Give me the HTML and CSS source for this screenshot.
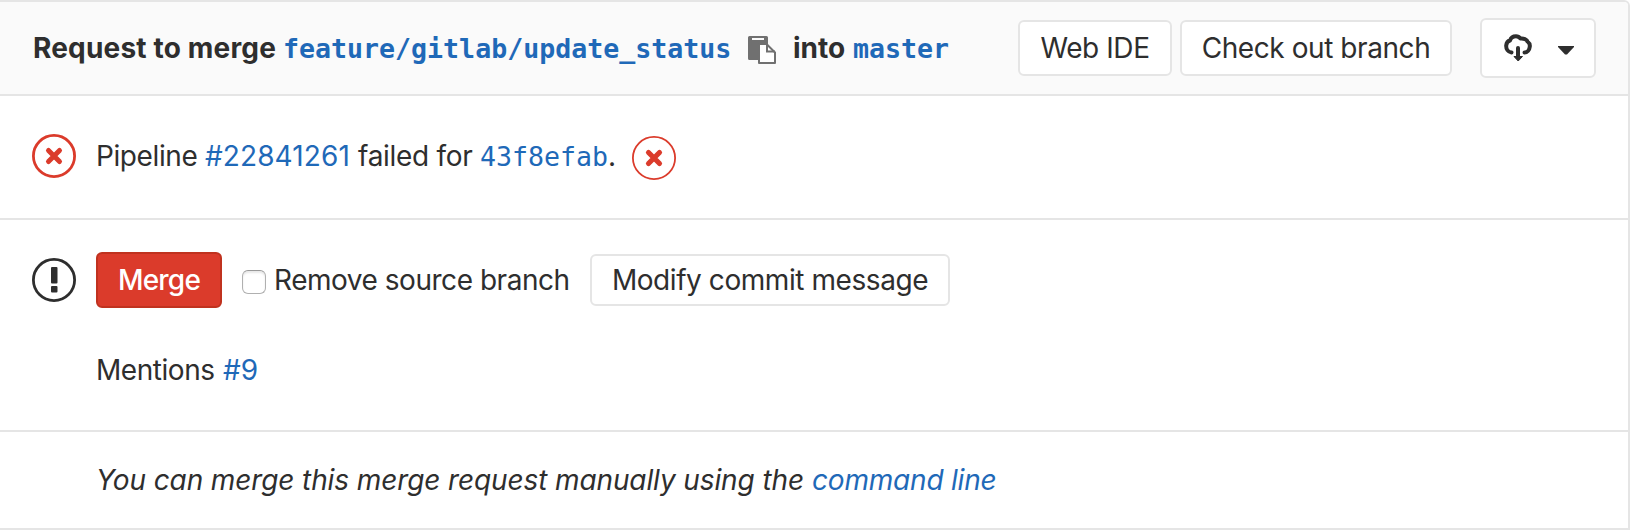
FILE: index.html
```
<!DOCTYPE html>
<html lang="en">
<head>
<meta charset="utf-8">
<title>Merge request</title>
<link rel="stylesheet" href="styles.css">
</head>
<body>
<main class="widget">
  <header class="header">
    <div class="title"><span class="t-request">Request to merge</span><a class="mono t-source">feature/gitlab/update_status</a><svg class="copy" width="28" height="28" viewBox="0 0 28 28"><path fill="#707070" fill-rule="evenodd" d="M1.5 0h17A1.5 1.5 0 0 1 20 1.500V8H10V24H1.500A1.500 1.500 0 0 1 0 22.500v-21A1.500 1.500 0 0 1 1.500 0zM4 2v2h12V2z"/><path fill="#fff" stroke="#707070" stroke-width="2" stroke-linejoin="round" d="M11 8v19h16V16.500L18.500 8z"/><path fill="none" stroke="#707070" stroke-width="2" d="M19 8v7.500h8"/></svg><span class="t-into">into</span><a class="mono t-target">master</a></div>
    <div class="actions">
      <button class="btn b-ide"><span>Web IDE</span></button>
      <button class="btn b-checkout"><span>Check out branch</span></button>
      <button class="btn b-download">
        <svg width="28" height="28" viewBox="0 0 28 28"><path fill="none" stroke="#2e2e2e" stroke-width="4" stroke-linecap="round" stroke-linejoin="round" d="M7.500 18.500C4 18 2 15 2.200 11.500C2.500 8.500 4 7 6 6.500C7 3 9 2.200 12 2.200C14 2.200 15.500 3.200 16.500 4.500C20 4 23 6 23.500 7.500C25.500 9 26 11 25.800 12.500C25.500 16 23 18.500 20.500 18.500"/><path fill="none" stroke="#2e2e2e" stroke-width="4" stroke-linecap="round" d="M14 14v9"/><path fill="#2e2e2e" stroke="#2e2e2e" stroke-linejoin="round" d="M10 22.500h8.500L14.200 27z"/></svg>
        <svg class="caret" width="16" height="9" viewBox="0 0 16 9"><path fill="#2e2e2e" d="M0 0h16v1L9 8.500H7L0 1z"/></svg>
      </button>
    </div>
  </header>
  <section class="row pipeline">
    <svg class="status" width="44" height="44" viewBox="0 0 44 44"><circle cx="22" cy="22" r="20.600" fill="none" stroke="#db3b2b" stroke-width="2.800"/><path stroke="#db3b2b" stroke-width="5" stroke-linecap="round" d="M16.500 16.500l11 11M27.500 16.500l-11 11"/></svg>
    <div class="text"><span class="t-pipeline">Pipeline</span><a class="t-id">#22841261</a><span class="t-failed">failed for</span><a class="mono t-sha">43f8efab</a><span class="t-dot">.</span></div>
    <svg class="stage" width="44" height="44" viewBox="0 0 44 44"><circle cx="22" cy="22" r="21.100" fill="none" stroke="#db3b2b" stroke-width="1.800"/><path stroke="#db3b2b" stroke-width="5.200" stroke-linecap="round" d="M16.500 16.500l11 11M27.500 16.500l-11 11"/></svg>
  </section>
  <section class="merge">
    <div class="controls">
      <svg class="status" width="44" height="44" viewBox="0 0 44 44"><circle cx="22" cy="22" r="20.600" fill="none" stroke="#2e2e2e" stroke-width="2.800"/><rect x="19" y="9" width="6.500" height="16.500" rx="1" fill="#2e2e2e"/><rect x="19" y="28" width="6.500" height="6.500" rx="1" fill="#2e2e2e"/></svg>
      <button class="btn b-merge"><span>Merge</span></button>
      <span class="box"></span>
      <label class="t-remove">Remove source branch</label>
      <button class="btn b-modify"><span>Modify commit message</span></button>
    </div>
    <div class="mentions"><span class="t-mentions">Mentions</span><a class="t-nine">#9</a></div>
  </section>
  <footer class="manual"><span class="t-manual">You can merge this merge request manually using the</span><a class="t-cmd">command line</a></footer>
</main>
</body>
</html>
```
FILE: styles.css
```
* { box-sizing: border-box; }
body {
  margin: 0;
  background: #fff;
  color: #2e2e2e;
  font: 28px/40px Inter, "Liberation Sans", sans-serif;
}
a { color: #1f69b8; }
.widget {
  display: flex;
  flex-direction: column;
  width: 1630px;
  height: 530px;
  border: 2px solid #e5e5e5;
  border-left: 0;
  border-radius: 0 6px 0 0;
  overflow: hidden;
  white-space: nowrap;
}
.header {
  display: flex;
  justify-content: space-between;
  height: 94px;
  padding: 0 32px;
  background: #fafafa;
  border-bottom: 2px solid #e5e5e5;
}
.title { display: flex; padding-top: 26px; font-weight: 700; }
.mono {
  margin-top: 1px;
  font-family: "DejaVu Sans Mono", monospace;
  font-size: 26.6px;
}
.t-request { width: 251px; padding-left: 1px; letter-spacing: 0.18px; }
.t-source, .t-target { font-weight: 700; }
.t-source { width: 465px; }
.copy { margin-top: 8px; }
.t-into { margin-left: 17px; width: 60px; }
.actions { display: flex; align-items: center; }
.btn {
  display: flex;
  align-items: center;
  justify-content: center;
  margin: 0;
  padding: 0;
  border: 2px solid #e5e5e5;
  border-radius: 6px;
  background: #fff;
  color: #2e2e2e;
  font: inherit;
  letter-spacing: -0.43px;
}
.b-ide { width: 154px; height: 56px; }
.b-checkout { width: 272px; height: 56px; margin-left: 8px; }
.b-download { width: 116px; height: 60px; margin-left: 28px; padding-left: 2px; }
.caret { margin: 4px 0 0 26px; }
.row { display: flex; }
.pipeline { height: 124px; padding: 38px 32px 0; border-bottom: 2px solid #e5e5e5; }
.text { display: flex; width: 536px; margin-left: 20px; padding-top: 2px; }
.stage { margin: 2px 0 0 0; }
.t-pipeline { width: 109px; letter-spacing: -0.4px; }
.t-id { width: 153px; letter-spacing: 0.1px; }
.t-failed { width: 122px; letter-spacing: -0.3px; }
.merge { height: 212px; padding: 32px 32px 0; border-bottom: 2px solid #e5e5e5; }
.controls { display: flex; align-items: center; height: 56px; }
.b-merge {
  width: 126px;
  height: 56px;
  margin-left: 20px;
  border-color: #c0321f;
  background: #db3b2b;
  color: #fff;
  font-weight: 500;
  letter-spacing: -0.8px;
}
.box {
  width: 24px;
  height: 24px;
  margin: 4px 8px 0 20px;
  border: 1px solid #b0b0b0;
  border-top-color: #999;
  border-radius: 6px;
  box-shadow: inset 0 2px 2px #e8e8e8;
}
.t-remove { width: 316px; letter-spacing: -0.47px; }
.b-modify { width: 360px; height: 52px; }
.mentions { display: flex; margin: 42px 0 0 64px; }
.t-mentions { width: 127px; letter-spacing: -0.45px; }
.manual { display: flex; padding: 28px 0 0 96px; font-style: italic; }
.t-manual { width: 716px; letter-spacing: -0.11px; }
.t-cmd { letter-spacing: -0.2px; }
```
